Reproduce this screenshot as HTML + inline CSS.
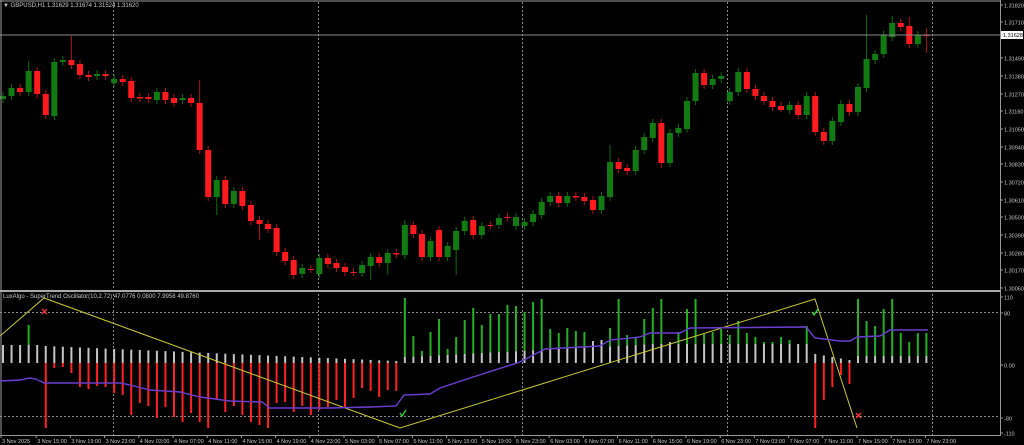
<!DOCTYPE html>
<html><head><meta charset="utf-8">
<style>
html,body{margin:0;padding:0;background:#000;overflow:hidden}
svg{display:block}
text{font-family:"Liberation Sans",sans-serif;font-size:6.5px;fill:#c8c8c8}
</style></head>
<body>
<svg id="s" width="1024" height="445" viewBox="0 0 1024 445" xmlns="http://www.w3.org/2000/svg">
<rect width="1024" height="445" fill="#000"/>
<g id="grid"></g>
<g id="cand"></g>
<g id="osc"></g>
<line x1="0" y1="35" x2="1000" y2="35" stroke="#8a8a8a" stroke-width="1"/>
<line x1="0" y1="1" x2="1000" y2="1" stroke="#9a9a9a" stroke-width="1"/>
<line x1="1" y1="0" x2="1" y2="435" stroke="#9a9a9a" stroke-width="1"/>
<line x1="1000.5" y1="0" x2="1000.5" y2="436" stroke="#9a9a9a" stroke-width="1"/>
<rect x="0" y="290" width="1000" height="2" fill="#a8a8a8"/>
<line x1="0" y1="435.5" x2="1001" y2="435.5" stroke="#9a9a9a" stroke-width="1"/>
<polyline points="0,336 44,298 400,428 815,299 857,428" fill="none" stroke="#c8c830" stroke-width="1"/>
<polyline id="purple" fill="none" stroke="#6a3fd0" stroke-width="1.4" points="0,381 20,380 30,378 36,379 44,383 120,383 130,385 150,390 180,392 200,397 230,401 262,402 270,408 330,408 370,407 396,406 404,395 430,394 440,388 470,378 520,362 545,349 600,346 610,340 640,337 650,333 680,333 690,328 806,327 815,338 840,341 850,341 857,337 880,336 890,330 928,330"/>
<path d="M42,309 L47,314 M47,309 L42,314" stroke="#ff3030" stroke-width="1.3"/>
<path d="M856,413 L861,418 M861,413 L856,418" stroke="#ff3030" stroke-width="1.3"/>
<path d="M400,413 L402,416 L406,410" stroke="#30e030" stroke-width="1.3" fill="none"/>
<path d="M812,312 L814,315 L818,309" stroke="#30e030" stroke-width="1.3" fill="none"/>
<text x="3" y="7" style="font-size:6px">▼ GBPUSD,H1  1.31629 1.31674 1.31524 1.31620</text>
<text x="3" y="298" style="font-size:6px">LuxAlgo - SuperTrend Oscillator(10,2.72) 47.0776 0.0800 7.9958 49.8760</text>
<g id="axis"></g>
</svg>
<script>
var NS="http://www.w3.org/2000/svg";
function el(p,t,a){var e=document.createElementNS(NS,t);for(var k in a)e.setAttribute(k,a[k]);p.appendChild(e);return e;}
var grid=document.getElementById('grid'),cand=document.getElementById('cand'),osc=document.getElementById('osc'),axis=document.getElementById('axis');
[113,318,522,727,932].forEach(function(x){el(grid,'line',{x1:x+.5,y1:2,x2:x+.5,y2:435,stroke:'#8a8a8a','stroke-dasharray':'2,2'});});
[312,416].forEach(function(y){el(grid,'line',{x1:0,y1:y+.5,x2:1000,y2:y+.5,stroke:'#8a8a8a','stroke-dasharray':'2,2'});});
var C="g96-99 g88-96 r88-92 g71-92 r71-94 r94-115 g62-116 g60-62 r60-65 r64-75 r75-77 g74-76 r74-76 g79-83 r79-82 r81-98 r97-98 r97-99 g92-100 r92-100 r98-103 g98-100 r98-103 r103-150 r150-197 g180-197 r180-204 g191-204 r191-206 r205-221 r220-224 r224-229 r228-252 r252-261 r260-275 g268-274 d269-269 g258-274 r258-264 r263-268 r267-272 d272-272 g265-273 g257-266 r257-263 g253-263 r253-254 g225-255 r225-234 r234-257 g241-257 r230-257 g246-257 g231-250 g221-231 r220-235 g226-235 d225-225 g218-225 d217-217 g217-226 g222-226 g214-222 g202-215 g196-202 r196-203 g196-203 r196-197 r197-201 r200-210 g196-210 g162-197 r162-169 r168-171 g150-171 g137-150 g123-138 r123-163 g133-163 g128-133 g101-129 g73-101 r73-85 g79-85 g76-79 g92-101 g72-92 r72-89 r89-96 r96-101 r101-107 r106-110 g105-110 r105-115 g96-115 r96-132 r132-141 g121-141 g104-122 r104-112 g87-112 g59-88 g54-60 g35-54 g23-37 r23-27 r26-44 g35-44 d35-35".split(' ');
var wk={3:[61,0],8:[36,0],23:[80,0],47:[220,0],53:[0,275],71:[145,0],77:[0,168],91:[0,112],101:[15,0],104:[16,0],106:[17,0],108:[28,53],45:[0,275],25:[0,215],43:[0,280],30:[0,240]};
C.forEach(function(s,i){
 var x=3+8.55*i,t=s[0],p=s.slice(1).split('-'),a=+p[0],b=+p[1];
 var col=t=='g'?'#117a11':(t=='r'?'#ff1a1f':'#c02020');
 var w=wk[i]||[0,0];var wt=w[0]||a-4,wb=w[1]||b+4;
 el(cand,'line',{x1:x,y1:wt,x2:x,y2:wb,stroke:t=='g'?'#0e6a0e':'#b01015','stroke-width':1});
 if(t=='d'){el(cand,'line',{x1:x-3,y1:a+.5,x2:x+3,y2:a+.5,stroke:'#ff1a1f'});}
 else el(cand,'rect',{x:x-3,y:a,width:6,height:Math.max(b-a,1.5),fill:col});
});
var Z=363;
var red={5:428,6:368,7:367,8:373,9:387,10:389,11:386,12:387,13:393,14:395,15:415,16:403,17:406,18:418,19:407,20:417,21:422,22:413,23:422,24:428,25:400,26:412,27:406,28:415,29:422,30:425,31:428,32:403,33:402,34:412,35:406,36:415,37:410,38:407,39:400,40:407,41:398,42:388,43:391,44:397,45:390,46:391,95:428,96:400,97:387,98:375,99:384};
var grn={3:325,47:298,48:336,49:351,50:332,51:319,52:349,53:337,54:320,55:308,56:325,57:314,58:314,59:305,60:306,61:312,62:302,63:299,64:329,65:333,66:328,67:331,68:332,71:328,72:299,73:335,74:337,75:319,76:308,77:299,79:332,80:309,81:299,82:334,83:332,84:329,85:335,86:321,87:333,88:337,89:342,90:342,91:337,92:340,93:346,94:326,100:299,101:321,102:326,103:309,104:299,105:333,106:342,107:333,108:333};
for(var i=0;i<109;i++){
 var x=3+8.55*i,gt;
 if(i<5) gt=345;
 else if(i<=46) gt=346+(i-5)*15/41;
 else if(i>=95&&i<=99) gt=354+(i-95)*1.5;
 else if(i>=100) gt=356;
 else gt=357-Math.min(13,(i-47)*0.45);
 if(i==69)gt=341; if(i==70)gt=340; if(i==78)gt=342;
 el(osc,'rect',{x:x-1,y:gt,width:2,height:Z-gt,fill:'#c4c4c4'});
 if(red[i]) el(osc,'rect',{x:x-1,y:Z,width:2,height:red[i]-Z,fill:'#ff2020'});
 if(grn[i]&&grn[i]<gt) el(osc,'rect',{x:x-1,y:grn[i],width:2,height:gt-grn[i],fill:'#22b022'});
}
var pl=[["1.31820",5],["1.31710",22],["1.31490",58],["1.31380",76],["1.31270",94],["1.31160",111],["1.31050",129],["1.30940",147],["1.30830",164],["1.30720",182],["1.30610",200],["1.30500",217],["1.30390",235],["1.30280",253],["1.30170",270],["1.30060",288],["110",297],["80",313],["0.00",365],["-80",418],["-110",433]];
pl.forEach(function(p){el(axis,'line',{x1:1000,y1:p[1],x2:1003,y2:p[1],stroke:'#9a9a9a'});var t=el(axis,'text',{x:1004,y:p[1]+2.5,style:'font-size:5.5px'});t.textContent=p[0];});
el(axis,'rect',{x:1001,y:31,width:22,height:8,fill:'#fff'});
var bt=el(axis,'text',{x:1003,y:37,style:'font-size:5.5px;fill:#000'});bt.textContent="1.31628";
var tl=["3 Nov 2025","3 Nov 15:00","3 Nov 19:00","3 Nov 23:00","4 Nov 03:00","4 Nov 07:00","4 Nov 11:00","4 Nov 15:00","4 Nov 19:00","4 Nov 23:00","5 Nov 03:00","5 Nov 07:00","5 Nov 11:00","5 Nov 15:00","5 Nov 19:00","5 Nov 23:00","6 Nov 03:00","6 Nov 07:00","6 Nov 11:00","6 Nov 15:00","6 Nov 19:00","6 Nov 23:00","7 Nov 03:00","7 Nov 07:00","7 Nov 11:00","7 Nov 15:00","7 Nov 19:00","7 Nov 23:00"];
tl.forEach(function(s,k){var x=k==0?1:2+34.2*k;el(axis,'line',{x1:x,y1:435,x2:x,y2:438,stroke:'#9a9a9a'});var t=el(axis,'text',{x:x+1,y:443,style:'font-size:5.5px'});t.textContent=s;});
</script>
</body></html>
